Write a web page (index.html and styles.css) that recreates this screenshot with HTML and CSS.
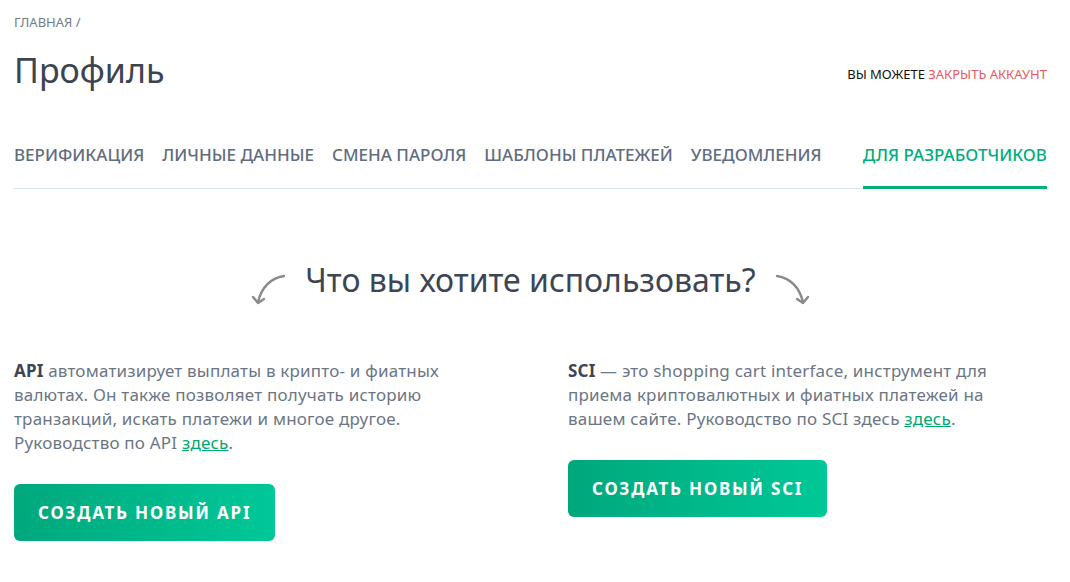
FILE: index.html
```html
<!DOCTYPE html>
<html lang="ru">
<head>
<meta charset="utf-8">
<title>Профиль</title>
<link rel="stylesheet" href="styles.css">
</head>
<body>
<div class="page">
  <div class="crumbs">ГЛАВНАЯ /</div>
  <div class="title-row">
    <h1 class="title">Профиль</h1>
    <div class="close-acc">ВЫ МОЖЕТЕ <a href="#" class="close-link">ЗАКРЫТЬ АККАУНТ</a></div>
  </div>
  <nav class="tabs">
    <a class="tab" href="#">ВЕРИФИКАЦИЯ</a>
    <a class="tab" href="#">ЛИЧНЫЕ ДАННЫЕ</a>
    <a class="tab" href="#">СМЕНА ПАРОЛЯ</a>
    <a class="tab" href="#">ШАБЛОНЫ ПЛАТЕЖЕЙ</a>
    <a class="tab" href="#">УВЕДОМЛЕНИЯ</a>
    <a class="tab tab-active" href="#">ДЛЯ РАЗРАБОТЧИКОВ</a>
  </nav>
  <div class="question">
    <svg class="arrow" width="40" height="40" viewBox="0 0 40 40">
      <path d="M36 6 C24 8 14 16 10 32" fill="none" stroke="#8a8a8a" stroke-width="2.4" stroke-linecap="round"/>
      <path d="M5 27 L10 33 L16 29" fill="none" stroke="#8a8a8a" stroke-width="2.4" stroke-linecap="round" stroke-linejoin="round"/>
    </svg>
    <h2 class="q-text">Что вы хотите использовать?</h2>
    <svg class="arrow" width="40" height="40" viewBox="0 0 40 40">
      <path d="M4 6 C16 8 26 16 30 32" fill="none" stroke="#8a8a8a" stroke-width="2.4" stroke-linecap="round"/>
      <path d="M24 29 L30 33 L35 27" fill="none" stroke="#8a8a8a" stroke-width="2.4" stroke-linecap="round" stroke-linejoin="round"/>
    </svg>
  </div>
  <div class="cols">
    <div class="col">
      <p class="desc"><b>API</b> автоматизирует выплаты в крипто- и фиатных валютах. Он также позволяет получать историю транзакций, искать платежи и многое другое. Руководство по API <a href="#" class="link">здесь</a>.</p>
      <button class="btn">СОЗДАТЬ НОВЫЙ API</button>
    </div>
    <div class="col">
      <p class="desc"><b>SCI</b> — это shopping cart interface, инструмент для приема криптовалютных и фиатных платежей на вашем сайте. Руководство по SCI здесь <a href="#" class="link">здесь</a>.</p>
      <button class="btn">СОЗДАТЬ НОВЫЙ SCI</button>
    </div>
  </div>
</div>
</body>
</html>
```
FILE: styles.css
```css
* { box-sizing: border-box; }
html, body { margin: 0; padding: 0; background: #fff; }
body { font-family: "Noto Sans", "Open Sans", sans-serif; color: #6b7685; }
.page { padding: 14px 23px 0 14px; }
.crumbs { font-size: 13px; line-height: 16px; color: #6f7c8c; }
.title-row { display: flex; justify-content: space-between; align-items: center; margin-top: 17px; }
.title { margin: 0; font-size: 34px; font-weight: 400; line-height: 46px; color: #3c4450; }
.close-acc { font-size: 13px; letter-spacing: 0; color: #111; padding-top: 8px; }
.close-link { color: #e85860; text-decoration: none; }
.tabs { display: flex; gap: 18px; margin-top: 51px; border-bottom: 1px solid #dde3ea; }
.tab { font-size: 17px; line-height: 22px; color: #5f6d7f; text-decoration: none; padding-bottom: 20px; font-weight: 500; }
.tab-active { margin-left: auto; color: #00ad7c; border-bottom: 3px solid #00b07a; margin-bottom: -1px; }
.question { display: flex; justify-content: center; align-items: center; gap: 17px; margin-top: 61px; }
.arrow { display: block; margin-top: 20px; }
.q-text { margin: 0; font-size: 32px; font-weight: 400; color: #3d4554; line-height: 40px; }
.cols { display: grid; grid-template-columns: 1fr 1fr; column-gap: 75px; margin-top: 49px; }
.desc { margin: 0; font-size: 17px; line-height: 24px; letter-spacing: 0.2px; max-width: 448px; }
.desc b { color: #3d4554; font-weight: 700; }
.link { color: #00a872; text-decoration: underline; }
.btn { margin-top: 29px; border: 0; border-radius: 6px; height: 57px; padding: 0 24px; background: linear-gradient(90deg, #00a87c, #00c898); color: #fff; font-family: "Noto Sans", sans-serif; font-size: 17px; font-weight: 700; letter-spacing: 1.8px; cursor: pointer; }
```
